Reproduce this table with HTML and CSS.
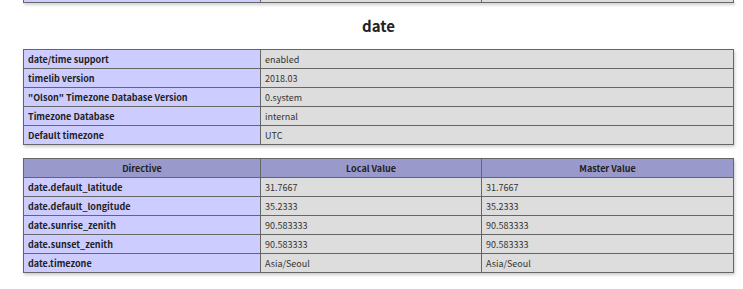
FILE: index.html
```html
<!DOCTYPE html>
<html lang="en">
<head>
  <meta charset="UTF-8"/>
  <title>phpinfo() - date</title>
  <link rel="stylesheet" href="styles.css">
</head>
<body>
  <div class="center">

    <table class="prev">
      <colgroup>
        <col class="c-e">
        <col class="c-l">
        <col class="c-m">
      </colgroup>
      <tr><td class="e"></td><td class="v"></td><td class="v"></td></tr>
    </table>

    <h2>date</h2>

    <table>
      <colgroup>
        <col class="c-e">
        <col>
      </colgroup>
      <tr><td class="e">date/time support</td><td class="v">enabled</td></tr>
      <tr><td class="e">timelib version</td><td class="v">2018.03</td></tr>
      <tr><td class="e">"Olson" Timezone Database Version</td><td class="v">0.system</td></tr>
      <tr><td class="e">Timezone Database</td><td class="v">internal</td></tr>
      <tr><td class="e">Default timezone</td><td class="v">UTC</td></tr>
    </table>

    <table>
      <colgroup>
        <col class="c-e">
        <col class="c-l">
        <col class="c-m">
      </colgroup>
      <tr class="h"><th>Directive</th><th>Local Value</th><th>Master Value</th></tr>
      <tr><td class="e">date.default_latitude</td><td class="v">31.7667</td><td class="v">31.7667</td></tr>
      <tr><td class="e">date.default_longitude</td><td class="v">35.2333</td><td class="v">35.2333</td></tr>
      <tr><td class="e">date.sunrise_zenith</td><td class="v">90.583333</td><td class="v">90.583333</td></tr>
      <tr><td class="e">date.sunset_zenith</td><td class="v">90.583333</td><td class="v">90.583333</td></tr>
      <tr><td class="e">date.timezone</td><td class="v">Asia/Seoul</td><td class="v">Asia/Seoul</td></tr>
    </table>

  </div>
</body>
</html>
```

FILE: styles.css
```css
body {
  margin: 0;
  background-color: #fff;
  color: #222;
  font-family: "Noto Sans CJK KR", "Noto Sans", sans-serif;
}

.center {
  width: 711px;
  margin-left: 23px;
}

table {
  border-collapse: collapse;
  border: 0;
  width: 711px;
  table-layout: fixed;
  margin-bottom: 13px;
  box-shadow: 1px 2px 3px #ccc;
}

.c-e { width: 237px; }
.c-l { width: 221px; }

td, th {
  border: 1px solid #666;
  font-size: 9px;
  line-height: 17px;
  height: 17px;
  padding: 1px 4px 0;
  text-align: left;
  white-space: nowrap;
  overflow: hidden;
}

.e {
  background-color: #ccf;
  font-weight: bold;
}

.v {
  background-color: #ddd;
  color: #333;
}

.h {
  background-color: #99c;
}

.h th {
  font-weight: bold;
  text-align: center;
}

.prev {
  margin: 0;
}

.prev td {
  height: 2px;
  line-height: 2px;
  padding: 0;
  border-top: 0;
}

h2 {
  margin: 0;
  font-size: 15px;
  line-height: 46px;
  text-align: center;
}
```
